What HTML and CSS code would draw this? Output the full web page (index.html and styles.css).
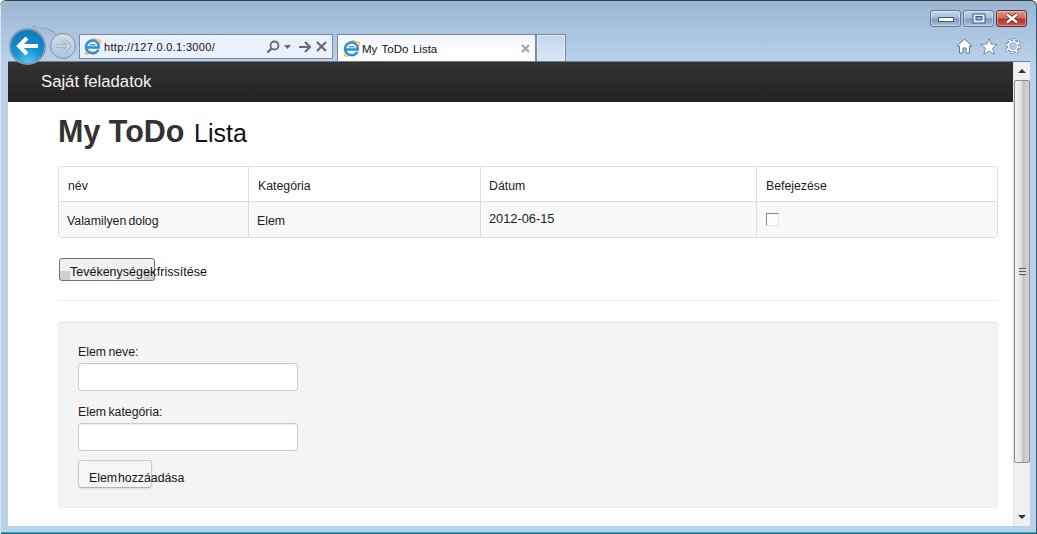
FILE: index.html
```html
<!DOCTYPE html>
<html lang="hu">
<head>
<meta charset="utf-8">
<title>My ToDo Lista</title>
<link rel="stylesheet" href="styles.css">
</head>
<body>
<div class="window">
  <div class="chrome">
    <div class="captions">
      <span class="cap"><svg width="16" height="8" viewBox="0 0 16 8"><rect x="0.5" y="2.5" width="15" height="4" fill="#fff" stroke="#3d5a7c"/></svg></span>
      <span class="cap"><svg width="14" height="11" viewBox="0 0 14 11"><rect x="1" y="1" width="12" height="9" fill="#e8f0f8" stroke="#3d5a7c"/><rect x="4" y="3.5" width="6" height="3.5" fill="#8eaac8" stroke="#3d5a7c"/></svg></span>
      <span class="cap cap-close"><svg width="16" height="11" viewBox="0 0 16 11"><path d="M3 1.5L13 9.5M13 1.5L3 9.5" stroke="#5a1a14" stroke-width="4"/><path d="M3 1.5L13 9.5M13 1.5L3 9.5" stroke="#fff" stroke-width="2.6"/></svg></span>
    </div>
    <div class="toolbar">
      <div class="nav">
        <span class="back"><svg width="24" height="20" viewBox="0 0 24 20"><path d="M11 2L3 10L11 18M3 10H22" fill="none" stroke="#fff" stroke-width="4" stroke-linejoin="miter"/></svg></span>
        <span class="forward"><svg width="16" height="14" viewBox="0 0 16 14"><path d="M9 1.500L14.500 7L9 12.500M14.500 7H1" fill="none" stroke="#8fa4bd" stroke-width="3.200"/><path d="M9 1.500L14.500 7L9 12.500M14.500 7H1" fill="none" stroke="#d5dfea" stroke-width="1.600"/></svg></span>
      </div>
      <div class="address">
        <svg class="ie" width="17" height="17" viewBox="0 0 17 17"><use href="#ie-logo"/></svg>
        <span class="url">http://127.0.0.1:3000/</span>
        <span class="addr-icons">
          <svg width="14" height="14" viewBox="0 0 14 14"><circle cx="8.500" cy="5.500" r="4" fill="none" stroke="#5f6b78" stroke-width="1.800"/><path d="M5.500 8.500L1.500 12.500" stroke="#5f6b78" stroke-width="2.400"/></svg>
          <svg width="7" height="4" viewBox="0 0 7 4"><path d="M0 0H7L3.500 4Z" fill="#5f6b78"/></svg>
          <svg class="gap-l" width="13" height="12" viewBox="0 0 13 12"><path d="M7 1L12 6L7 11M12 6H1" fill="none" stroke="#5f6b78" stroke-width="2"/></svg>
          <svg class="gap-s" width="11" height="11" viewBox="0 0 11 11"><path d="M1 1L10 10M10 1L1 10" stroke="#5f6b78" stroke-width="2.200"/></svg>
        </span>
      </div>
      <div class="tab">
        <svg class="ie" width="17" height="17" viewBox="0 0 17 17"><use href="#ie-logo"/></svg>
        <span class="tab-title">My ToDo Lista</span>
        <svg class="tab-x" width="9" height="9" viewBox="0 0 9 9"><path d="M1 1L8 8M8 1L1 8" stroke="#a2a6ab" stroke-width="2.200"/></svg>
      </div>
      <div class="newtab"></div>
      <div class="tools">
        <svg width="17" height="16" viewBox="0 0 17 16"><path d="M8.500 1L16 8H13.500V15H10V10H7V15H3.500V8H1Z" fill="#fff" stroke="#5d7998" stroke-width="1"/></svg>
        <svg width="18" height="17" viewBox="0 0 18 17"><path d="M9 0.500L11.200 6.100L17.200 6.400L12.600 10.200L14.200 16.200L9 12.900L3.800 16.200L5.400 10.200L0.800 6.400L6.800 6.100Z" fill="#fff" stroke="#5d7998" stroke-width="0.800"/></svg>
        <svg width="16" height="16" viewBox="0 0 16 16"><circle cx="8" cy="8" r="6.600" fill="none" stroke="#5d7998" stroke-width="3.200" stroke-dasharray="2.600 2.580"/><circle cx="8" cy="8" r="5" fill="none" stroke="#5d7998" stroke-width="3.200"/><circle cx="8" cy="8" r="6.600" fill="none" stroke="#fff" stroke-width="2" stroke-dasharray="2.200 2.980" stroke-dashoffset="-0.200"/><circle cx="8" cy="8" r="4.600" fill="none" stroke="#fff" stroke-width="1.800"/></svg>
      </div>
    </div>
  </div>

  <div class="viewport">
    <div class="page">
      <div class="navbar"><a class="brand">Saját feladatok</a></div>
      <main class="container">
        <h1 class="title">My ToDo <small class="sub">Lista</small></h1>
        <div class="table-box">
          <div class="t-row t-head">
            <div class="cell c1">név</div>
            <div class="cell c2">Kategória</div>
            <div class="cell c3">Dátum</div>
            <div class="cell c4">Befejezése</div>
          </div>
          <div class="t-row t-body">
            <div class="cell c1 shift">Valamilyen dolog</div>
            <div class="cell c2 shift">Elem</div>
            <div class="cell c3 up">2012-06-15</div>
            <div class="cell c4"><span class="check"></span></div>
          </div>
        </div>
        <div class="refresh-row"><button class="btn btn-refresh" type="button">Tevékenységek frissítése</button></div>
        <hr class="rule">
        <form class="well">
          <label class="lbl">Elem neve:</label>
          <input class="field" type="text">
          <label class="lbl lbl-next">Elem kategória:</label>
          <input class="field" type="text">
          <button class="btn btn-add" type="button">Elem hozzáadása</button>
        </form>
      </main>
    </div>
    <div class="scrollbar">
      <span class="arrow arrow-up"></span>
      <div class="thumb"><span class="grip"></span></div>
      <span class="arrow arrow-down"></span>
    </div>
  </div>
</div>
<svg class="defs" width="0" height="0">
  <defs>
    <g id="ie-logo">
      <path d="M2.500 13.500C0.500 15.800 3 17 6.500 15M13.500 2.500C15.800 0.500 17 3 15.500 6M13 2C10 0 6 1 3 5" fill="none" stroke="#f2b01e" stroke-width="1.300"/>
      <path d="M2.500 9.500H14.800C14.800 5 12 2.500 8.800 2.500C5 2.500 2 5.500 2 8.800C2 12.500 5 15.200 8.800 15.200C11.200 15.200 13.300 14 14.300 11.800" fill="none" stroke="#2f8fd8" stroke-width="2.600"/>
      <path d="M5.500 6.800H11.500" stroke="#2f8fd8" stroke-width="1.200"/>
    </g>
  </defs>
</svg>
</body>
</html>
```
FILE: styles.css
```css
* { box-sizing: border-box; }
html, body { margin: 0; padding: 0; height: 100%; overflow: hidden; }
body { font-family: "Liberation Sans", Arial, sans-serif; font-size: 13px; color: #1a1a1a; background: #fff; }
.defs { position: absolute; }

.window {
  width: 1037px; height: 534px;
  display: flex; flex-direction: column;
  background: linear-gradient(#9bb6d3 0, #b9d1ea 60px, #b9d1ea 100%);
  border-top: 1px solid #3c3f42;
  border-radius: 6px 6px 0 0;
  padding-bottom: 8px;
  box-shadow: inset 1px 0 0 #dbe6f2, inset -1px 0 0 #33596e, inset 0 -1px 0 #33596e, inset 0 -2px 0 #19b5d8;
}

.chrome { height: 60px; flex: none; padding: 9px 10px 0 8px; }
.captions { display: flex; justify-content: flex-end; gap: 2px; height: 17px; }
.cap {
  width: 31px; height: 17px; display: flex; align-items: center; justify-content: center;
  border: 1px solid #5f7896; border-radius: 3px;
  background: linear-gradient(#c6d6e8 0, #a3bcd8 48%, #7b9abd 52%, #a6c0da 100%);
  box-shadow: inset 0 0 0 1px rgba(255,255,255,.4);
}
.cap-close { border-color: #5c2a2a; background: linear-gradient(#e0938a 0, #cf6b60 48%, #b5352a 52%, #c9564a 100%); }

.toolbar { display: flex; align-items: flex-start; height: 34px; }
.nav { display: flex; align-items: center; width: 71px; height: 36px; margin-top: 1px; flex: none; position: relative; }
.nav::before {
  content: ""; position: absolute; left: 22px; top: 0; width: 30px; height: 14px;
  background: linear-gradient(#a4bcd6, #b6cce4);
  border-top: 1px solid #8ba2bc;
  border-radius: 0 16px 0 0;
  transform: rotate(10deg);
}
.back {
  width: 37px; height: 37px; margin-left: 1px; flex: none; border-radius: 50%;
  display: flex; align-items: center; justify-content: center;
  border: 2px solid #8099b4;
  background: radial-gradient(circle at 50% 100%, #58c8f0 0, #1592d2 42%, #0e72b4 100%);
  position: relative; z-index: 1;
}
.forward {
  width: 26px; height: 26px; margin-left: 4px; flex: none; border-radius: 50%;
  display: flex; align-items: center; justify-content: center;
  border: 1px solid #7c93ad;
  background: linear-gradient(#cfdcea, #aec4dc);
  position: relative; z-index: 1;
}
.address {
  width: 254px; height: 25px; margin-top: 7px; flex: none;
  display: flex; align-items: center; padding: 0 4px;
  border: 1px solid #7a8a9c;
  background: #eaf1fa;
}
.ie { flex: none; }
.url { font-size: 11px; margin-left: 3px; color: #101010; white-space: nowrap; letter-spacing: .32px; }
.addr-icons { margin-left: auto; display: flex; align-items: center; gap: 4px; padding-right: 1px; }
.gap-l { margin-left: 3px; }
.gap-s { margin-left: 1px; }
.tab {
  width: 199px; height: 28px; margin: 7px 0 0 4px; flex: none;
  display: flex; align-items: center; padding: 0 4px 0 5px;
  border: 1px solid #7a8a9c; border-bottom: 0;
  background: linear-gradient(#eef3fa 0, #fff 60%);
}
.tab-title { font-size: 11.500px; margin-left: 2px; color: #101010; white-space: nowrap; word-spacing: 1.300px; }
.tab-x { margin-left: auto; margin-right: 1px; }
.newtab {
  width: 30px; height: 28px; margin-top: 7px; flex: none;
  border: 1px solid #7a8a9c; border-bottom: 0;
  box-shadow: inset 0 0 0 1px #e5eef8;
  background: linear-gradient(#c4d6ec, #dbe7f5);
}
.tools { margin-left: auto; margin-top: 11px; display: flex; align-items: flex-start; gap: 7px; margin-right: 6px; }

.viewport { flex: 1; min-height: 0; display: flex; margin: 0 7px 0 8px; background: #fff; overflow: hidden; border-top: 1px solid #6e7f92; }
.page { flex: 1; min-width: 0; }
.navbar {
  height: 40px; display: flex; align-items: center; padding-left: 33px;
  background: linear-gradient(#333 0, #222 100%);
}
.brand { color: #f4f4f4; font-size: 16.700px; line-height: 40px; }

.container { padding: 0 15px 0 50px; }
.title { margin: 0; height: 64px; padding-top: 10px; font-size: 30.500px; line-height: 38px; font-weight: bold; color: #333; white-space: nowrap; }
.sub { font-size: 25px; font-weight: normal; color: #111; margin-left: 1px; }

.table-box { border: 1px solid #ddd; border-radius: 4px; overflow: hidden; }
.t-row { display: flex; }
.t-head { height: 35px; border-bottom: 1px solid #ddd; background: #fff; }
.t-body { height: 35px; background: #f9f9f9; }
.t-head .cell { padding-top: 3px; }
.t-body .cell { padding-top: 2px; }
.cell { display: flex; align-items: center; padding-left: 9px; font-size: 12.300px; color: #1c1c1c; border-left: 1px solid #ddd; }
.cell:first-child { border-left: 0; }
.c1 { width: 189px; }
.c2 { width: 232px; }
.c3 { width: 276px; padding-left: 8px; }
.c4 { flex: 1; }
.shift { padding-left: 8px; word-spacing: -1.200px; }
.t-body .up { padding-top: 0; padding-bottom: 3px; font-size: 12.800px; }
.check { width: 13px; height: 13px; margin-bottom: 2px; background: #fdfdfd; border: 1px solid; border-color: #8a8a8a #e4e4e4 #e4e4e4 #8a8a8a; }

.refresh-row { height: 62px; padding: 20px 0 0 1px; }
.btn { display: block; padding: 4px 0 0; font: 12.500px "Liberation Sans", Arial, sans-serif; color: #111; text-align: left; white-space: nowrap; overflow: visible; }
.btn-refresh {
  width: 96px; height: 23px; padding-left: 10px; word-spacing: -2.800px;
  border: 1px solid #707070; border-radius: 3px;
  background:
    linear-gradient(#cfcfcf, #cfcfcf) left 0 bottom 0 / 10px 45% no-repeat,
    linear-gradient(#cfcfcf, #cfcfcf) right 0 bottom 0 / 10px 45% no-repeat,
    #f0f0f0;
}
.rule { height: 1px; margin: 0; border: 0; background: #eee; }

.well {
  margin-top: 20px; height: 187px; padding: 23px 19px 0;
  display: flex; flex-direction: column; align-items: flex-start;
  background: #f4f4f4; border: 1px solid #eee; border-radius: 4px;
  box-shadow: inset 0 1px 1px rgba(0,0,0,.05);
}
.lbl { height: 18px; line-height: 14px; font-size: 12.300px; color: #1a1a1a; word-spacing: -1px; }
.lbl-next { margin-top: 14px; }
.field {
  width: 220px; height: 28px; flex: none; padding: 0;
  background: #fff; border: 1px solid #ccc; border-radius: 3px;
  box-shadow: inset 0 1px 1px rgba(0,0,0,.07);
}
.btn-add {
  width: 74px; height: 28px; margin-top: 9px; padding-left: 10px; padding-top: 7px;
  font-size: 12.300px; word-spacing: -2.400px;
  border: 1px solid #ccc; border-bottom-color: #b3b3b3; border-radius: 4px;
  background: #f5f5f5;
  box-shadow: 0 1px 2px rgba(0,0,0,.1);
}

.scrollbar { width: 17px; flex: none; position: relative; display: flex; flex-direction: column; align-items: center; background: #f0f0f0; border-left: 1px solid #e4e4e4; }
.arrow { flex: none; width: 0; height: 0; border-left: 4px solid transparent; border-right: 4px solid transparent; }
.arrow-up { border-bottom: 4px solid #333; margin-top: 7px; }
.arrow-down { border-top: 4px solid #333; margin-top: auto; margin-bottom: 7px; }
.thumb {
  width: 16px; height: 383px; margin-top: 7px; flex: none;
  display: flex; align-items: center; justify-content: center;
  border: 1px solid #8b8b8b; border-radius: 2px;
  background: linear-gradient(90deg, #f2f2f2 0, #e2e2e2 45%, #c2c2c2 55%, #d4d4d4 100%);
}
.grip { width: 7px; height: 7px; background: repeating-linear-gradient(#555 0, #555 1px, #ddd 1px, #ddd 3px); }
```
